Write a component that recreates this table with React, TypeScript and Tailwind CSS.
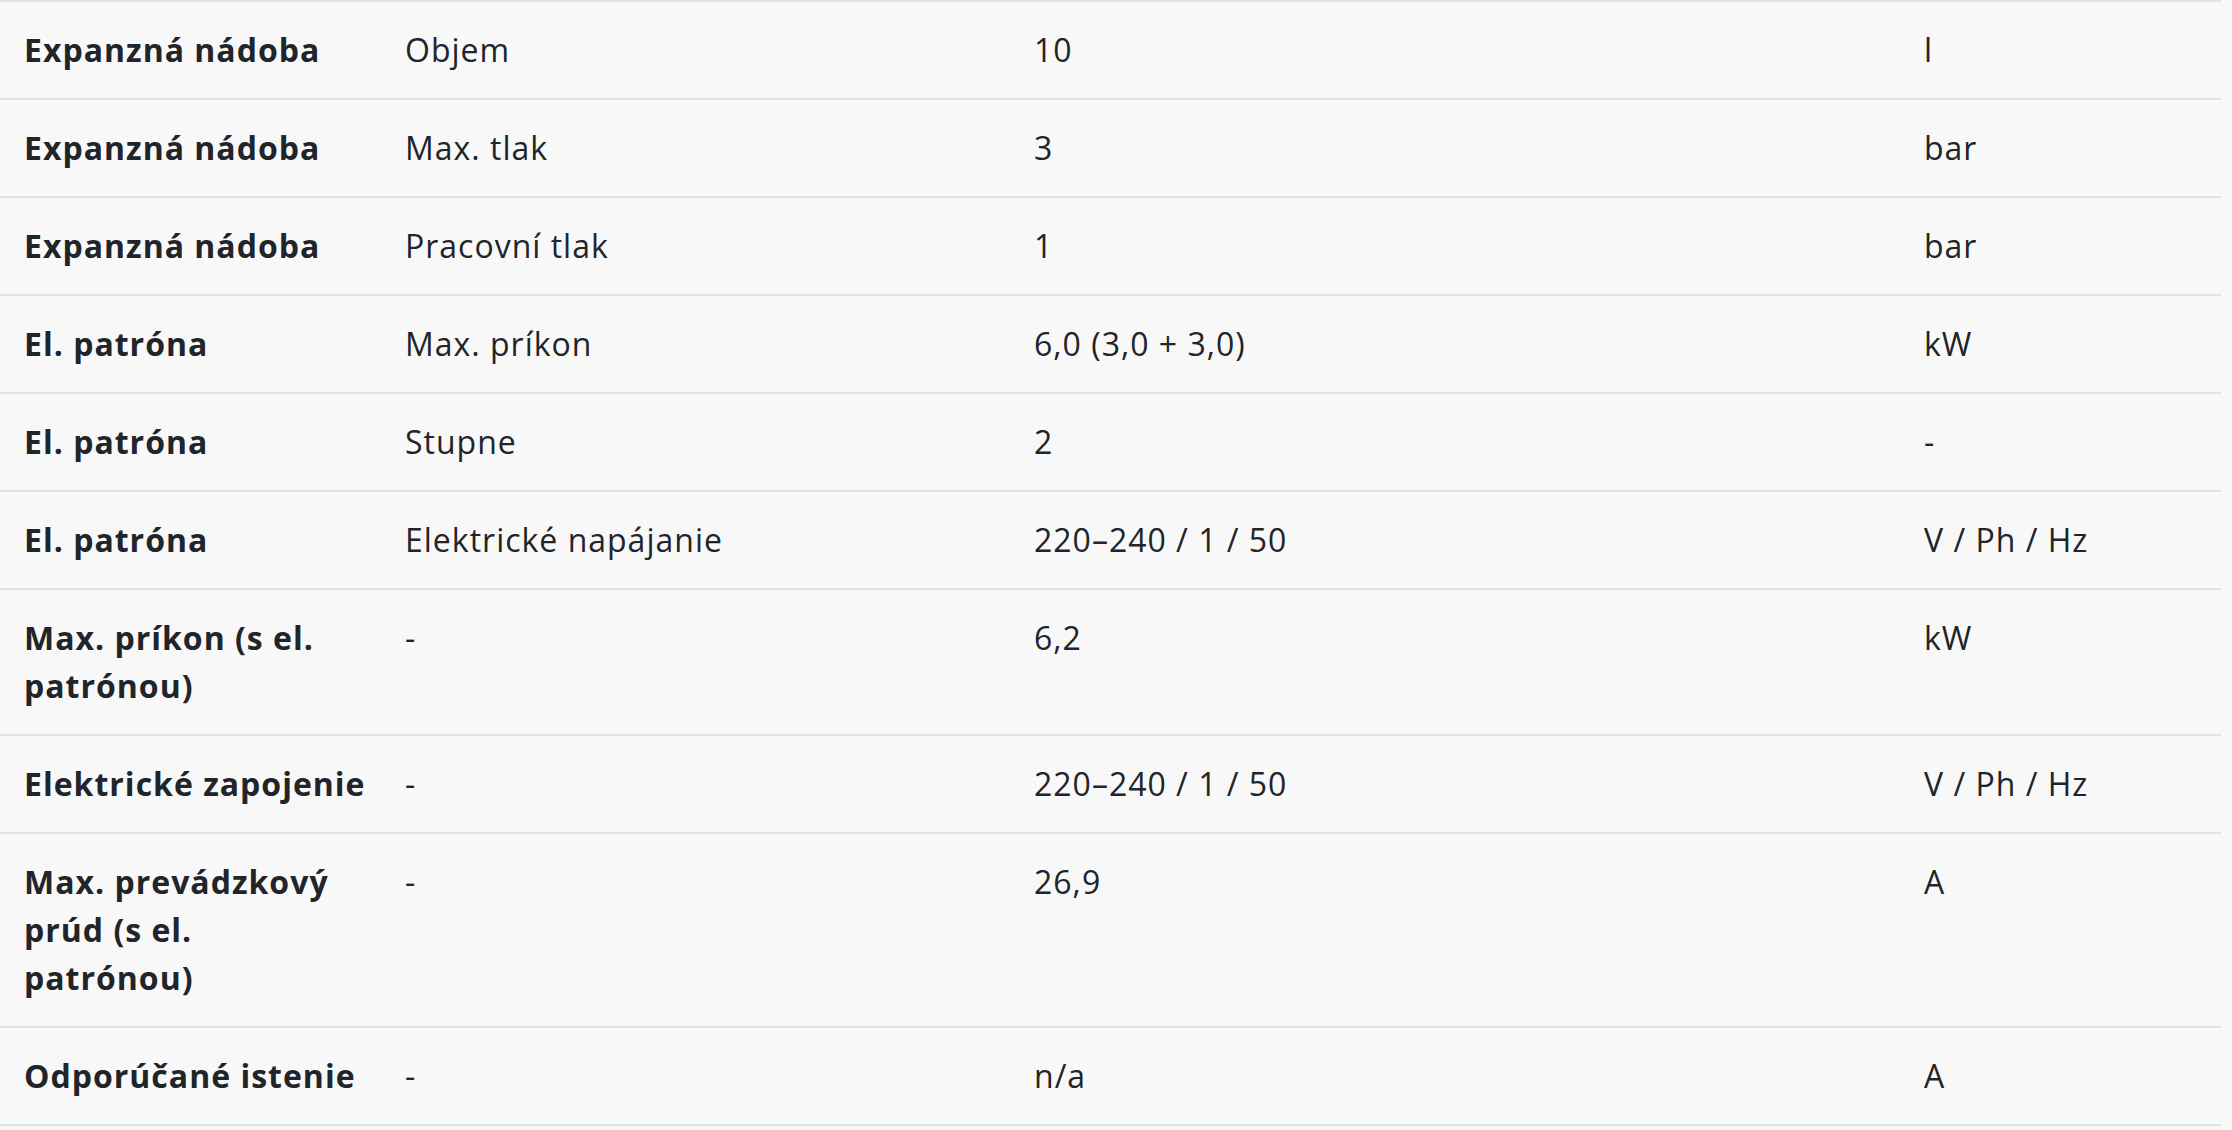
import React from "react";

interface Row {
  label: string;
  param: string;
  value: string;
  unit: string;
}

const rows: Row[] = [
  { label: "Expanzná nádoba", param: "Objem", value: "10", unit: "l" },
  { label: "Expanzná nádoba", param: "Max. tlak", value: "3", unit: "bar" },
  { label: "Expanzná nádoba", param: "Pracovní tlak", value: "1", unit: "bar" },
  { label: "El. patróna", param: "Max. príkon", value: "6,0 (3,0 + 3,0)", unit: "kW" },
  { label: "El. patróna", param: "Stupne", value: "2", unit: "-" },
  { label: "El. patróna", param: "Elektrické napájanie", value: "220–240 / 1 / 50", unit: "V / Ph / Hz" },
  { label: "Max. príkon (s el.\npatrónou)", param: "-", value: "6,2", unit: "kW" },
  { label: "Elektrické zapojenie", param: "-", value: "220–240 / 1 / 50", unit: "V / Ph / Hz" },
  { label: "Max. prevádzkový\nprúd (s el.\npatrónou)", param: "-", value: "26,9", unit: "A" },
  { label: "Odporúčané istenie", param: "-", value: "n/a", unit: "A" },
];

const App = () => {
  return (
    <div
      className="min-h-screen bg-[#f8f8f8] text-[#212529]"
      style={{ fontFamily: '"Open Sans", "Noto Sans", sans-serif' }}
    >
      <table className="table-fixed w-[2221px] border-collapse text-[32px] leading-[48px] tracking-[1px]">
        <colgroup>
          <col className="w-[381px]" />
          <col className="w-[629px]" />
          <col className="w-[890px]" />
          <col className="w-[321px]" />
        </colgroup>
        <tbody>
          {rows.map((row, i) => (
            <tr key={i} className="border-t-2 border-b-2 border-[#dee2e6]">
              <td className="px-6 py-6 align-top font-bold whitespace-pre">{row.label}</td>
              <td className="px-6 py-6 align-top">{row.param}</td>
              <td className="px-6 py-6 align-top">{row.value}</td>
              <td className="px-6 py-6 align-top">{row.unit}</td>
            </tr>
          ))}
        </tbody>
      </table>
    </div>
  );
};

export default App;
